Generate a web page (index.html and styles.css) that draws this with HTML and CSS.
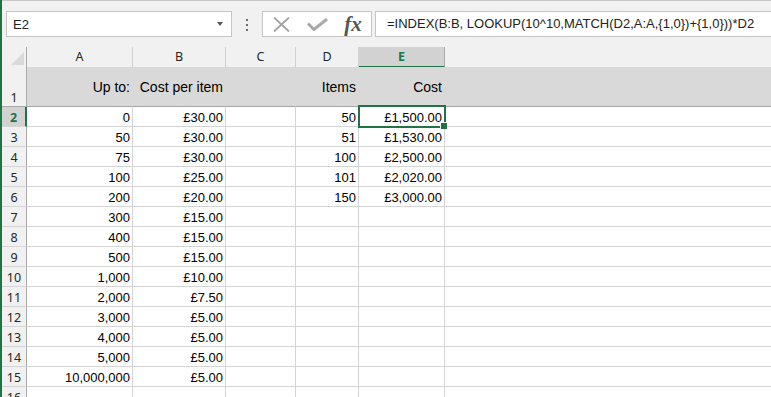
FILE: index.html
```html
<!DOCTYPE html>
<html lang="en">
<head>
<meta charset="utf-8">
<title>Sheet1</title>
<link rel="stylesheet" href="styles.css">
</head>
<body>
<div class="app">
  <div class="bar">
    <div class="namebox"><span>E2</span><span class="caret"></span></div>
    <div class="grip"><i></i><i></i><i></i></div>
    <div class="buttons">
      <span><svg width="17" height="15" viewBox="0 0 17 15"><path d="M1 0.5 L16 14.5 M16 0.5 L1 14.5" stroke="#a3a3a3" stroke-width="1.8" fill="none"/></svg></span>
      <span><svg width="21" height="13" viewBox="0 0 21 13"><path d="M1 5.5 L7 11.5 L20 1" stroke="#a8a8a8" stroke-width="3" fill="none"/></svg></span>
      <span class="fx">fx</span>
    </div>
    <div class="formula">=INDEX(B:B, LOOKUP(10^10,MATCH(D2,A:A,{1,0})+{1,0}))*D2</div>
  </div>

  <div class="sheet">
    <div class="row head">
      <div class="corner"><span class="tri"></span></div>
      <div class="ch">A</div>
      <div class="ch">B</div>
      <div class="ch">C</div>
      <div class="ch">D</div>
      <div class="ch sel">E</div>
      <div class="ch last"></div>
    </div>
    <div class="row r1">
      <div class="rh">1</div>
      <div class="c">Up to:</div>
      <div class="c">Cost per item</div>
      <div class="c"></div>
      <div class="c">Items</div>
      <div class="c">Cost</div>
      <div class="c last"></div>
    </div>
    <div class="row">
      <div class="rh sel">2</div>
      <div class="c">0</div>
      <div class="c">£30.00</div>
      <div class="c"></div>
      <div class="c">50</div>
      <div class="c active">£1,500.00</div>
      <div class="c last"></div>
    </div>
    <div class="row">
      <div class="rh">3</div>
      <div class="c">50</div>
      <div class="c">£30.00</div>
      <div class="c"></div>
      <div class="c">51</div>
      <div class="c">£1,530.00</div>
      <div class="c last"></div>
    </div>
    <div class="row">
      <div class="rh">4</div>
      <div class="c">75</div>
      <div class="c">£30.00</div>
      <div class="c"></div>
      <div class="c">100</div>
      <div class="c">£2,500.00</div>
      <div class="c last"></div>
    </div>
    <div class="row">
      <div class="rh">5</div>
      <div class="c">100</div>
      <div class="c">£25.00</div>
      <div class="c"></div>
      <div class="c">101</div>
      <div class="c">£2,020.00</div>
      <div class="c last"></div>
    </div>
    <div class="row">
      <div class="rh">6</div>
      <div class="c">200</div>
      <div class="c">£20.00</div>
      <div class="c"></div>
      <div class="c">150</div>
      <div class="c">£3,000.00</div>
      <div class="c last"></div>
    </div>
    <div class="row">
      <div class="rh">7</div>
      <div class="c">300</div>
      <div class="c">£15.00</div>
      <div class="c"></div><div class="c"></div><div class="c"></div>
      <div class="c last"></div>
    </div>
    <div class="row">
      <div class="rh">8</div>
      <div class="c">400</div>
      <div class="c">£15.00</div>
      <div class="c"></div><div class="c"></div><div class="c"></div>
      <div class="c last"></div>
    </div>
    <div class="row">
      <div class="rh">9</div>
      <div class="c">500</div>
      <div class="c">£15.00</div>
      <div class="c"></div><div class="c"></div><div class="c"></div>
      <div class="c last"></div>
    </div>
    <div class="row">
      <div class="rh">10</div>
      <div class="c">1,000</div>
      <div class="c">£10.00</div>
      <div class="c"></div><div class="c"></div><div class="c"></div>
      <div class="c last"></div>
    </div>
    <div class="row">
      <div class="rh">11</div>
      <div class="c">2,000</div>
      <div class="c">£7.50</div>
      <div class="c"></div><div class="c"></div><div class="c"></div>
      <div class="c last"></div>
    </div>
    <div class="row">
      <div class="rh">12</div>
      <div class="c">3,000</div>
      <div class="c">£5.00</div>
      <div class="c"></div><div class="c"></div><div class="c"></div>
      <div class="c last"></div>
    </div>
    <div class="row">
      <div class="rh">13</div>
      <div class="c">4,000</div>
      <div class="c">£5.00</div>
      <div class="c"></div><div class="c"></div><div class="c"></div>
      <div class="c last"></div>
    </div>
    <div class="row">
      <div class="rh">14</div>
      <div class="c">5,000</div>
      <div class="c">£5.00</div>
      <div class="c"></div><div class="c"></div><div class="c"></div>
      <div class="c last"></div>
    </div>
    <div class="row">
      <div class="rh">15</div>
      <div class="c">10,000,000</div>
      <div class="c">£5.00</div>
      <div class="c"></div><div class="c"></div><div class="c"></div>
      <div class="c last"></div>
    </div>
    <div class="row">
      <div class="rh">16</div>
      <div class="c"></div><div class="c"></div><div class="c"></div><div class="c"></div><div class="c"></div>
      <div class="c last"></div>
    </div>
  </div>
</div>
</body>
</html>
```

FILE: styles.css
```css
body{
  margin: 0;
  background: #fff;
  font-family: "Liberation Sans", Arial, sans-serif;
}
.app{
  width: 771px;
  height: 397px;
  overflow: hidden;
  box-sizing: border-box;
  border-left: 2px solid #217346;
  background: #fff;
}

/* formula bar */
.bar{
  height: 47px;
  box-sizing: border-box;
  border-top: 1px solid #c8c8c8;
  background: #f1f1f1;
  display: flex;
  align-items: flex-start;
  padding: 10px 0 0 4px;
}
.namebox{
  width: 226px;
  height: 26px;
  box-sizing: border-box;
  flex: none;
  background: #fff;
  border: 1px solid #c6c6c6;
  display: flex;
  align-items: center;
  justify-content: space-between;
  padding: 0 8px 0 6px;
  font-size: 13px;
  color: #222;
}
.caret{
  width: 0;
  height: 0;
  border-left: 3px solid transparent;
  border-right: 3px solid transparent;
  border-top: 4px solid #595959;
}
.grip{
  width: 30px;
  height: 26px;
  flex: none;
  display: flex;
  flex-direction: column;
  align-items: center;
  gap: 3px;
  padding-top: 8px;
  box-sizing: border-box;
}
.grip i{
  width: 2px;
  height: 2px;
  background: #6d6d6d;
}
.buttons{
  width: 110px;
  height: 26px;
  flex: none;
  box-sizing: border-box;
  border: 1px solid #c6c6c6;
  background: #fff;
  display: flex;
}
.buttons span{
  width: 36px;
  display: flex;
  align-items: center;
  justify-content: center;
}
.buttons svg{
  display: block;
}
.fx{
  font-family: "Liberation Serif", "Times New Roman", serif;
  font-style: italic;
  font-weight: bold;
  font-size: 21px;
  color: #555;
  line-height: 24px;
}
.formula{
  flex: 1;
  margin-left: 3px;
  height: 26px;
  box-sizing: border-box;
  border: 1px solid #c6c6c6;
  border-right: 0;
  background: #fff;
  padding-left: 11px;
  line-height: 24px;
  font-size: 13px;
  color: #222;
  white-space: nowrap;
}

/* grid */
.row{
  display: grid;
  grid-template-columns: 25px 106px 93px 70px 63px 86px 1fr;
  height: 20px;
}
.row.r1{
  height: 40px;
}
.row > div{
  box-sizing: border-box;
}

.corner{
  background: #f1f1f1;
  border-right: 1px solid #ababab;
  border-bottom: 1px solid #ababab;
  display: flex;
  justify-content: flex-end;
  align-items: flex-end;
  padding: 0 2px 2px 0;
}
.tri{
  width: 0;
  height: 0;
  border-left: 13px solid transparent;
  border-bottom: 13px solid #dadada;
}
.ch{
  background: #f1f1f1;
  border-right: 1px solid #d0d0d0;
  border-bottom: 1px solid #ababab;
  text-align: center;
  font-family: "Noto Sans", sans-serif;
  font-size: 12.5px;
  line-height: 19px;
  color: #262626;
}
.ch.sel{
  background: #d2d2d2;
  border-right-color: #ababab;
  border-bottom: 2px solid #217346;
  color: #217346;
  font-weight: bold;
}
.ch.last{
  border-right: 0;
}

.rh{
  background: #f1f1f1;
  border-right: 1px solid #ababab;
  border-bottom: 1px solid #d5d5d5;
  display: flex;
  justify-content: center;
  align-items: flex-end;
  font-family: "Noto Sans", sans-serif;
  font-size: 12.5px;
  line-height: 17px;
  color: #262626;
}
.rh.sel{
  background: #d2d2d2;
  border-right: 2px solid #217346;
  color: #217346;
  font-weight: bold;
}

.c{
  background: #fff;
  border-right: 1px solid #d4d4d4;
  border-bottom: 1px solid #d4d4d4;
  display: flex;
  justify-content: flex-end;
  align-items: flex-end;
  padding: 0 2px 1px 0;
  font-size: 13px;
  line-height: 15px;
  color: #000;
  white-space: nowrap;
}
.c.last{
  border-right: 0;
}
.r1 .rh{
  border-bottom-color: #ababab;
}
.r1 .c{
  background: #d9d9d9;
  border-right-color: #d9d9d9;
  border-bottom-color: #a6a6a6;
  align-items: center;
  padding-bottom: 0;
  font-size: 14px;
  line-height: 16px;
}

/* active cell */
.c.active{
  position: relative;
  z-index: 2;
}
.c.active::before{
  content: "";
  position: absolute;
  top: -2px;
  left: -1px;
  right: -2px;
  bottom: -2px;
  border: 2px solid #217346;
}
.c.active::after{
  content: "";
  position: absolute;
  right: -3px;
  bottom: -3px;
  width: 6px;
  height: 6px;
  background: #217346;
  border-left: 1px solid #fff;
  border-top: 1px solid #fff;
}
```
